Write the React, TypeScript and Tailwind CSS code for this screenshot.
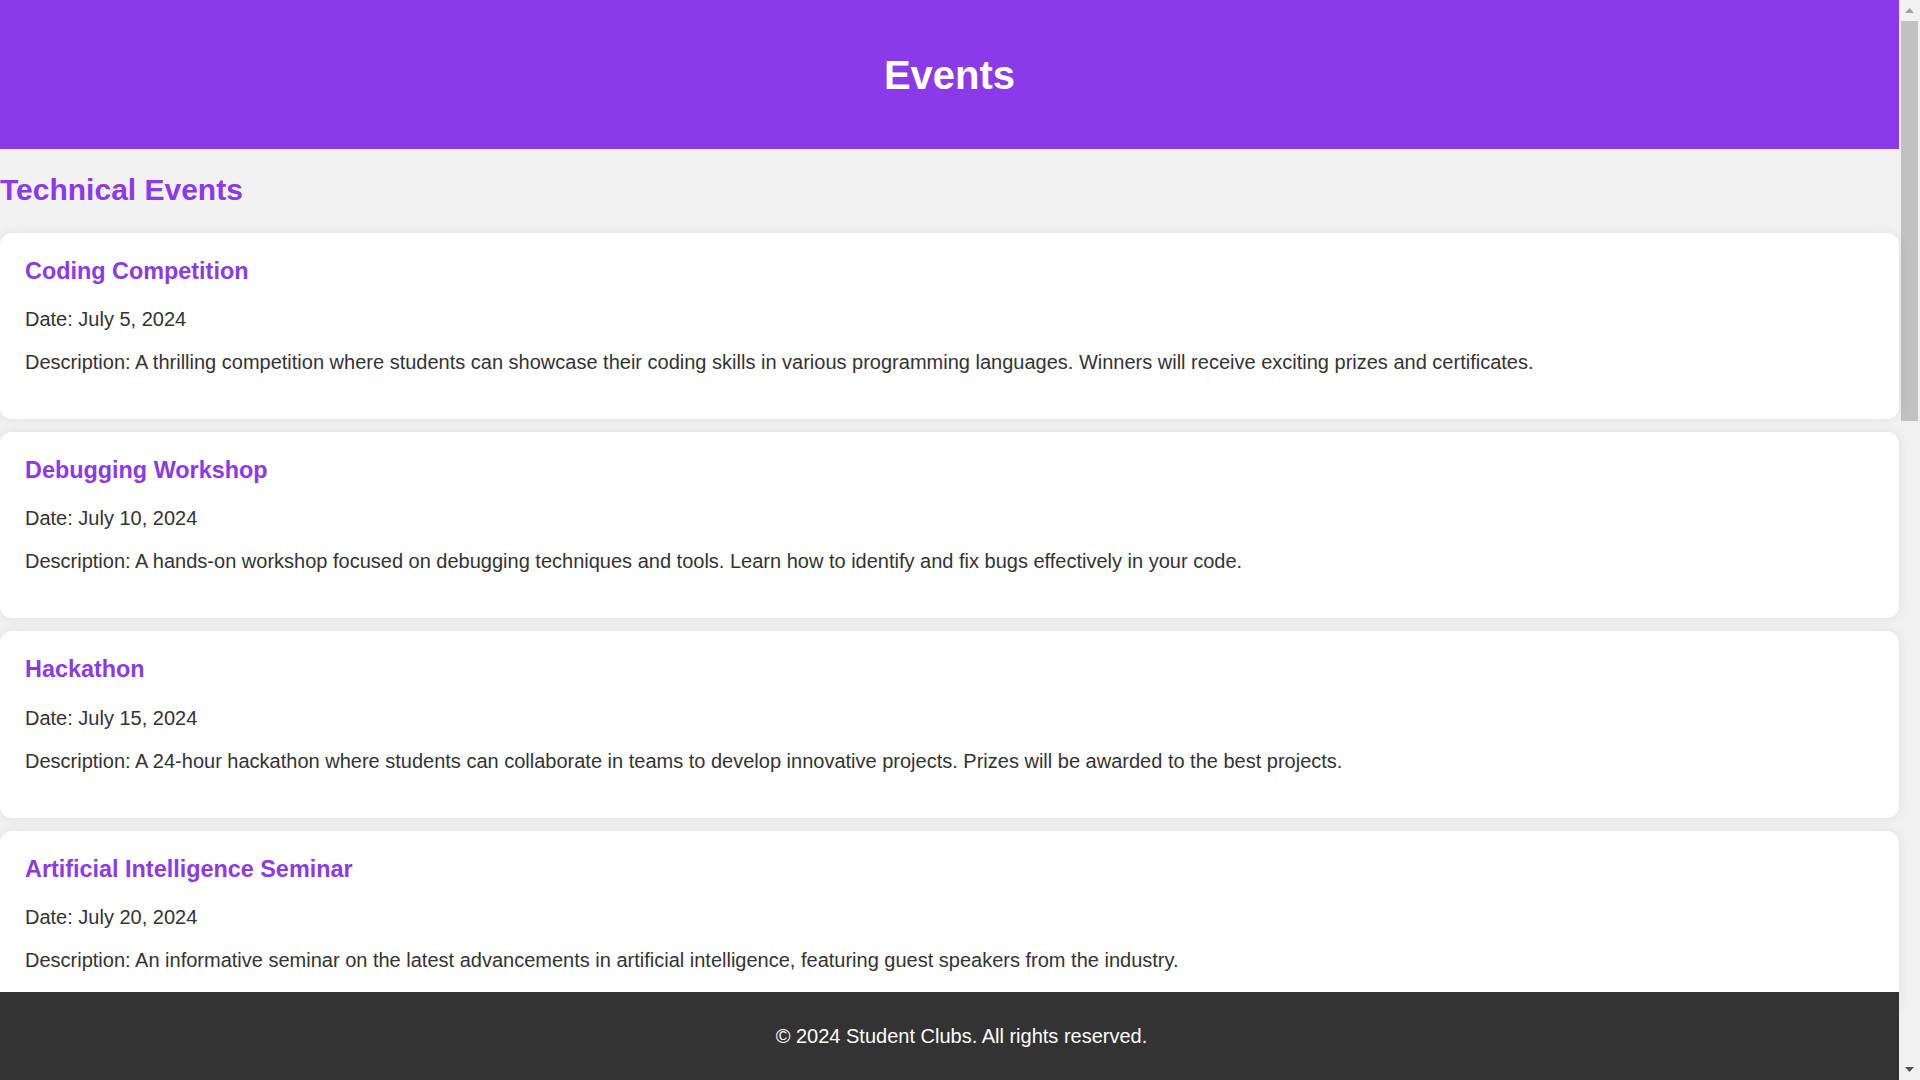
import React from 'react';

type EventItem = {
  title: string;
  date: string;
  description: string;
};

const technicalEvents: EventItem[] = [
  {
    title: 'Coding Competition',
    date: 'July 5, 2024',
    description:
      'A thrilling competition where students can showcase their coding skills in various programming languages. Winners will receive exciting prizes and certificates.',
  },
  {
    title: 'Debugging Workshop',
    date: 'July 10, 2024',
    description:
      'A hands-on workshop focused on debugging techniques and tools. Learn how to identify and fix bugs effectively in your code.',
  },
  {
    title: 'Hackathon',
    date: 'July 15, 2024',
    description:
      'A 24-hour hackathon where students can collaborate in teams to develop innovative projects. Prizes will be awarded to the best projects.',
  },
  {
    title: 'Artificial Intelligence Seminar',
    date: 'July 20, 2024',
    description:
      'An informative seminar on the latest advancements in artificial intelligence, featuring guest speakers from the industry.',
  },
];

function EventCard({ event }: { event: EventItem }) {
  return (
    <div className="mb-[13px] rounded-[12px] bg-white p-[25px] shadow-[0_0_12px_rgba(0,0,0,0.08)]">
      <h3 className="mb-[23.4px] text-[23.4px] font-bold leading-[27px] text-[#8a3ae8]">{event.title}</h3>
      <p className="mb-[20px] text-[20px] leading-[23px] text-[#333]">Date: {event.date}</p>
      <p className="mb-[20px] text-[20px] leading-[23px] text-[#333]">Description: {event.description}</p>
    </div>
  );
}

// the browser's own scrollbar, as it shows in the screenshot
function Scrollbar() {
  return (
    <div className="flex h-screen w-[21px] shrink-0 flex-col bg-[#f1f1f1]">
      <div className="flex h-[21px] items-center justify-center">
        <svg width="9" height="5" viewBox="0 0 9 5">
          <path d="M4.5 0L9 5H0z" fill="#a3a3a3" />
        </svg>
      </div>
      <div className="mx-[2px] h-[400px] bg-[#c1c1c1]" />
      <div className="flex-1" />
      <div className="flex h-[21px] items-center justify-center">
        <svg width="9" height="5" viewBox="0 0 9 5">
          <path d="M0 0H9L4.5 5z" fill="#505050" />
        </svg>
      </div>
    </div>
  );
}

export default function App() {
  return (
    <div className="flex h-screen overflow-hidden bg-[#f2f2f2] font-['Liberation_Sans',Arial,sans-serif]">
      <div className="relative min-w-0 flex-1">
        <header className="flex h-[149px] items-center justify-center bg-[#8a3ae8]">
          <h1 className="text-[40px] font-bold leading-[46px] text-white">Events</h1>
        </header>
        <main>
          <section>
            <h2 className="mb-[25px] mt-[24px] text-[30px] font-bold leading-[34.5px] text-[#8a3ae8]">
              Technical Events
            </h2>
            {technicalEvents.map((event) => (
              <EventCard key={event.title} event={event} />
            ))}
          </section>
        </main>
        <footer className="absolute bottom-0 left-0 right-0 flex h-[88px] items-center justify-center bg-[#333] pl-[24px] text-[20px] leading-[23px] text-white">
          © 2024 Student Clubs. All rights reserved.
        </footer>
      </div>
      <Scrollbar />
    </div>
  );
}
